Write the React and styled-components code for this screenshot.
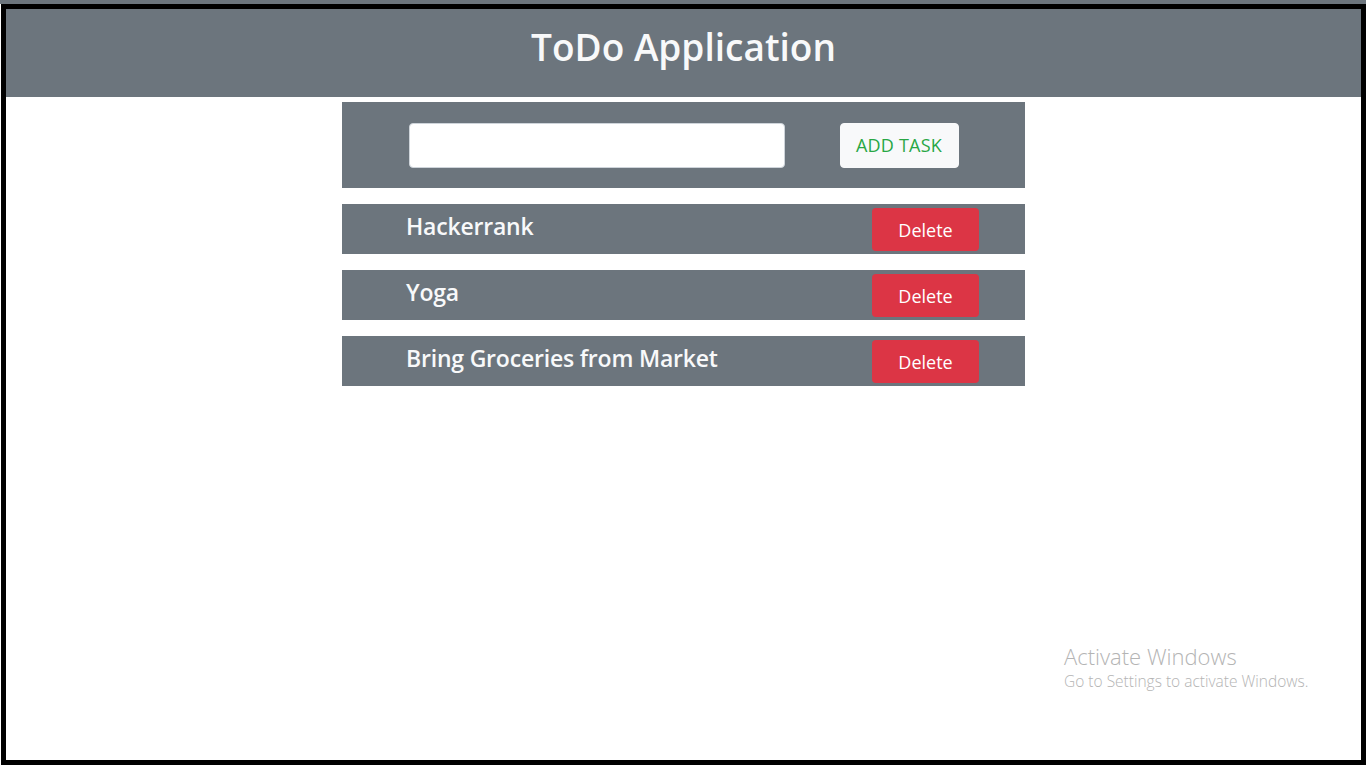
import React, { useState } from 'react';
import styled, { createGlobalStyle } from 'styled-components';

const GlobalStyle = createGlobalStyle`
  html, body {
    margin: 0;
    padding: 0;
    background: #ffffff;
  }
  body {
    font-family: 'Open Sans', 'Noto Sans', sans-serif;
  }
  * {
    box-sizing: border-box;
  }
`;

const Shot = styled.div`
  height: 768px;
  border-top: 4px solid #6c757d;
  padding: 0 0 3px 1px;
  position: relative;
`;

const Frame = styled.div`
  height: 761px;
  border: 5px solid #000000;
  display: flex;
  flex-direction: column;
`;

const Header = styled.header`
  height: 88px;
  background: #6c757d;
  display: flex;
  align-items: center;
  justify-content: center;
  h1 {
    margin: 0 0 12px;
    color: #f8f9fa;
    font-size: 37px;
    font-weight: 600;
    line-height: 1.2;
  }
`;

const Board = styled.main`
  width: 683px;
  margin: 5px auto 0;
  display: flex;
  flex-direction: column;
  gap: 16px;
`;

const TaskForm = styled.form`
  height: 86px;
  background: #6c757d;
  display: flex;
  align-items: center;
  justify-content: center;
  gap: 55px;
`;

const TaskInput = styled.input`
  width: 376px;
  height: 45px;
  border: 1px solid #ced4da;
  border-radius: 4px;
  background: #ffffff;
  padding: 6px 12px;
  font-size: 16px;
  font-family: inherit;
  outline: none;
`;

const AddButton = styled.button`
  width: 119px;
  height: 45px;
  border: 1px solid #f8f9fa;
  border-radius: 4px;
  background: #f8f9fa;
  color: #28a745;
  font-family: inherit;
  font-size: 18px;
  letter-spacing: 0.2px;
  cursor: pointer;
`;

const TaskList = styled.ul`
  list-style: none;
  margin: 0;
  padding: 0;
  display: flex;
  flex-direction: column;
  gap: 16px;
`;

const TaskRow = styled.li`
  height: 50px;
  background: #6c757d;
  display: flex;
  align-items: center;
  justify-content: space-between;
  padding: 0 46px 0 64px;
`;

const TaskTitle = styled.h4`
  margin: 0 0 6px;
  color: #f8f9fa;
  font-size: 23px;
  font-weight: 600;
  letter-spacing: -0.2px;
`;

const DeleteButton = styled.button`
  width: 107px;
  height: 43px;
  margin-top: 1px;
  border: none;
  border-radius: 4px;
  background: #dc3545;
  color: #ffffff;
  font-family: inherit;
  font-size: 18px;
  cursor: pointer;
`;

const Watermark = styled.div`
  position: absolute;
  left: 1064px;
  top: 641px;
  color: #b4b4b4;
  font-family: 'Open Sans', sans-serif;
  font-weight: 300;
  line-height: 1;
  p {
    margin: 0;
  }
  .big {
    font-size: 22px;
  }
  .small {
    margin-top: 7px;
    font-size: 15.5px;
  }
`;

const initialTasks = ['Hackerrank', 'Yoga', 'Bring Groceries from Market'];

const App = () => {
  const [tasks, setTasks] = useState(initialTasks);
  const [text, setText] = useState('');

  const addTask = (e) => {
    e.preventDefault();
    if (!text.trim()) return;
    setTasks([...tasks, text.trim()]);
    setText('');
  };

  return (
    <Shot>
      <GlobalStyle />
      <Frame>
        <Header>
          <h1>ToDo Application</h1>
        </Header>
        <Board>
          <TaskForm onSubmit={addTask}>
            <TaskInput value={text} onChange={(e) => setText(e.target.value)} />
            <AddButton type="submit">ADD TASK</AddButton>
          </TaskForm>
          <TaskList>
            {tasks.map((task, i) => (
              <TaskRow key={i}>
                <TaskTitle>{task}</TaskTitle>
                <DeleteButton
                  onClick={() => setTasks(tasks.filter((_, j) => j !== i))}
                >
                  Delete
                </DeleteButton>
              </TaskRow>
            ))}
          </TaskList>
        </Board>
      </Frame>
      <Watermark>
        <p className="big">Activate Windows</p>
        <p className="small">Go to Settings to activate Windows.</p>
      </Watermark>
    </Shot>
  );
};

export default App;
